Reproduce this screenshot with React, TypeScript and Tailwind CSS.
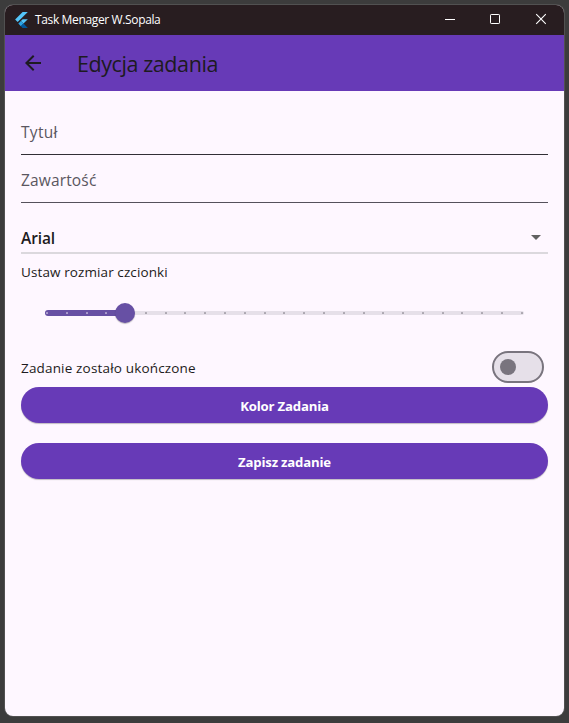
import React from "react";

const TICKS = Array.from({ length: 25 }, (_, i) => i);

function FlutterLogo() {
  return (
    <svg width="13" height="16" viewBox="0 0 13 16" className="mb-px shrink-0">
      <path d="M7.6 0H12.8L2.7 10.1L0.1 7.5Z" fill="#54c5f8" />
      <path d="M7.6 7.3H12.8L8.5 11.6L5.9 9Z" fill="#54c5f8" />
      <path d="M3.3 11.6L5.9 9L8.5 11.6L5.9 14.2Z" fill="#29a5e8" />
      <path d="M5.9 14.2L8.5 11.6L12.8 15.9H7.6Z" fill="#01579b" />
    </svg>
  );
}

function TitleBar() {
  return (
    <div className="flex h-[30px] items-center bg-[#281d20] pl-[10px] text-white">
      <FlutterLogo />
      <span className="ml-[7px] text-[12px] leading-4 tracking-[-0.36px] whitespace-nowrap">
        Task Menager W.Sopala
      </span>
      <div className="ml-auto flex h-full">
        <svg width="46" height="30" viewBox="0 0 46 30" stroke="white" fill="none">
          <path d="M18 14.5H28" />
        </svg>
        <svg width="45" height="30" viewBox="0 0 45 30" stroke="white" fill="none">
          <rect x="17.5" y="9.5" width="9" height="9" rx="0.7" />
        </svg>
        <svg width="46" height="30" viewBox="0 0 46 30" stroke="white" fill="none">
          <path d="M18.2 9.2L27.8 18.8M27.8 9.2L18.2 18.8" strokeWidth="1.1" />
        </svg>
      </div>
    </div>
  );
}

function AppBar() {
  return (
    <div className="flex h-14 items-center bg-[#673ab7] pl-4 text-[#1d1b20]">
      <svg width="24" height="24" viewBox="0 0 24 24" fill="currentColor">
        <path d="M20 11H7.83l5.59-5.59L12 4l-8 8 8 8 1.41-1.41L7.83 13H20v-2z" />
      </svg>
      <h1 className="mt-[2px] ml-8 text-[21.5px] leading-7 font-normal tracking-[-0.42px] whitespace-nowrap">
        Edycja zadania
      </h1>
    </div>
  );
}

function Field({ label, className }: { label: string; className: string }) {
  return (
    <div className={`flex h-12 items-center border-b text-[15.5px] text-[#5a5660] ${className}`}>
      <span className="mt-[5px] font-normal">{label}</span>
    </div>
  );
}

function FontSlider() {
  return (
    <div className="mx-6 mt-[21px] grid h-5 items-center [&>*]:col-start-1 [&>*]:row-start-1">
      <div className="h-1 rounded-full bg-[#e6e0e9]" />
      <div className="h-1.5 w-20 rounded-full bg-[#6750a4]" />
      <div className="z-10 flex justify-between px-[1px]">
        {TICKS.map((i) => (
          <span
            key={i}
            className={`size-[2px] rounded-[0.5px] ${i < 4 ? "bg-[#ad9fcd]" : "bg-[#aaa5ae]"}`}
          />
        ))}
      </div>
      <div className="z-20 ml-[70px] size-5 rounded-full bg-[#6750a4] shadow-[0_1px_1px_rgba(0,0,0,0.25)]" />
    </div>
  );
}

function FilledButton({ children, className }: { children: React.ReactNode; className: string }) {
  return (
    <button
      className={`block h-9 w-full rounded-full bg-[#673ab7] pt-[3px] text-[13.2px] font-bold text-white shadow-[0_1px_1px_rgba(0,0,0,0.24)] ${className}`}
    >
      {children}
    </button>
  );
}

export default function App() {
  return (
    <div className="h-[723px] w-[569px] bg-[#3c3c3c] pt-[5px] pl-[5px] font-['Open_Sans','Noto_Sans',sans-serif]">
      <div className="h-[711px] w-[559px] overflow-hidden rounded-[8px] bg-[#fef7ff] shadow-[0_0_0_1px_#515151]">
        <TitleBar />
        <AppBar />
        <main className="px-4 pt-4 text-[#1d1b20]">
          <Field label="Tytuł" className="border-[#322f36] tracking-[0.3px]" />
          <Field label="Zawartość" className="border-[#55515b] tracking-[0.15px]" />
          <div className="mt-[17px] flex h-[34px] items-center justify-between border-b-2 border-[#dbd8dd] pr-[7px]">
            <span className="mt-[5px] text-[15.5px] font-semibold tracking-[-0.1px]">Arial</span>
            <svg width="10" height="5" viewBox="0 0 10 5" fill="#616161" className="mt-[3px]">
              <path d="M0 0H10L5 5Z" />
            </svg>
          </div>
          <p className="mt-2 text-[13.5px] leading-5 tracking-[0.1px]">Ustaw rozmiar czcionki</p>
          <FontSlider />
          <div className="mt-7 flex h-8 items-center justify-between pr-1">
            <span className="mt-[2px] text-[13.5px] tracking-[0.17px]">Zadanie zostało ukończone</span>
            <div className="flex h-8 w-[52px] items-center rounded-full border-2 border-[#79747e] bg-[#e6e0e9] pl-1.5">
              <span className="size-4 rounded-full bg-[#79747e]" />
            </div>
          </div>
          <FilledButton className="mt-1 tracking-[-0.2px]">Kolor Zadania</FilledButton>
          <FilledButton className="mt-5 tracking-[-0.2px]">Zapisz zadanie</FilledButton>
        </main>
      </div>
    </div>
  );
}
